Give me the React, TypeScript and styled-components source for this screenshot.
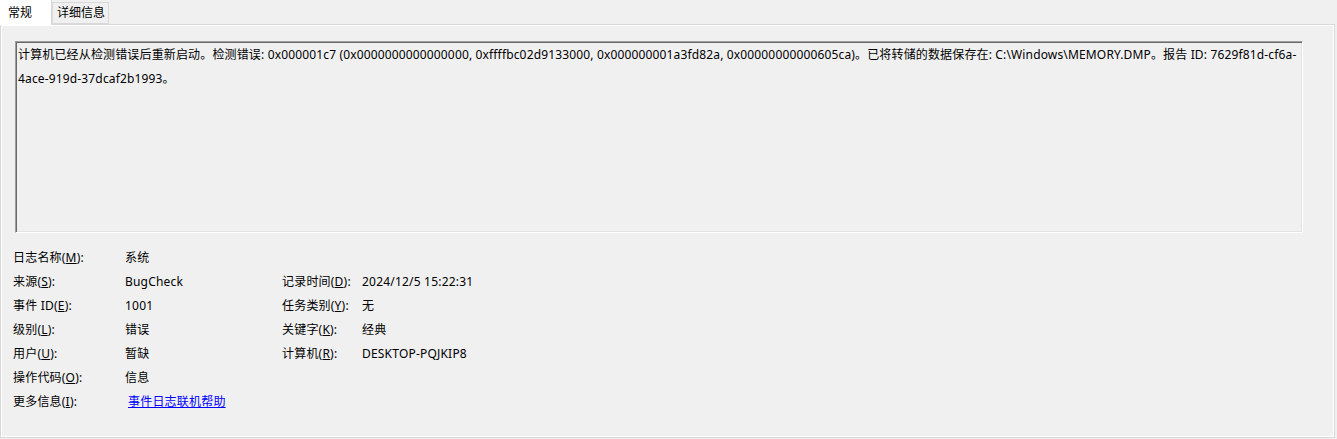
import React from "react";
import styled, { createGlobalStyle } from "styled-components";

const GlobalStyle = createGlobalStyle`
  html, body {
    margin: 0;
    padding: 0;
    background: #f0f0f0;
  }
  body {
    font-family: "Noto Sans", "Noto Sans CJK SC", sans-serif;
    font-size: 12px;
    letter-spacing: 0.2px;
    color: #000;
  }
`;

const Window = styled.div`
  width: 1337px;
  height: 439px;
  display: flex;
  flex-direction: column;
  background: #f0f0f0;
`;

const TabStrip = styled.div`
  display: flex;
  align-items: flex-end;
  height: 24px;
  position: relative;
  z-index: 1;
`;

const Tab = styled.div<{ $active?: boolean }>`
  box-sizing: border-box;
  display: flex;
  align-items: center;
  height: ${(p) => (p.$active ? "25px" : "22px")};
  margin-bottom: ${(p) => (p.$active ? "-1px" : "0")};
  padding-left: ${(p) => (p.$active ? "8px" : "4px")};
  padding-right: ${(p) => (p.$active ? "19px" : "3px")};
  background: ${(p) => (p.$active ? "#fff" : "#f0f0f0")};
  border: 1px solid #d9d9d9;
  border-bottom: ${(p) => (p.$active ? "none" : "1px solid #d9d9d9")};
  border-left: ${(p) => (p.$active ? "none" : "1px solid #d9d9d9")};
  border-top: ${(p) => (p.$active ? "none" : "1px solid #d9d9d9")};
  line-height: 1;
  letter-spacing: 0;
  white-space: nowrap;
`;

const Page = styled.div`
  box-sizing: border-box;
  width: 1335px;
  height: 414px;
  border: 1px solid #d9d9d9;
  box-shadow: inset 0 0 0 1px #fff;
  padding: 16px 0 0 12px;
  display: flex;
  flex-direction: column;
`;

const Description = styled.div`
  box-sizing: border-box;
  width: 1288px;
  height: 192px;
  margin-left: 2px;
  padding: 1px 0 0 2px;
  border-style: solid;
  border-width: 1px;
  border-color: #a0a0a0 #fff #fff #a0a0a0;
  box-shadow: inset 1px 1px 0 #696969, inset -1px -1px 0 #e3e3e3;
  line-height: 24px;
  letter-spacing: 0.15px;
  overflow: hidden;
`;

const Fields = styled.div`
  display: grid;
  grid-template-columns: 112px 157px 80px auto;
  grid-auto-rows: 24px;
  align-items: center;
  margin-top: 12px;
`;

const Label = styled.span<{ $col?: number }>`
  grid-column: ${(p) => p.$col ?? 1};
  white-space: nowrap;
`;

const Value = styled.span<{ $col?: number }>`
  grid-column: ${(p) => p.$col ?? 2};
  white-space: nowrap;
`;

const Key = styled.span`
  text-decoration: underline;
`;

const HelpLink = styled.a`
  grid-column: 2 / span 2;
  margin-left: 3px;
  color: #0000ff;
  text-decoration: underline;
  white-space: nowrap;
`;

const text =
  "计算机已经从检测错误后重新启动。检测错误: 0x000001c7 (0x0000000000000000, 0xffffbc02d9133000, 0x000000001a3fd82a, 0x00000000000605ca)。已将转储的数据保存在: C:\\Windows\\MEMORY.DMP。报告 ID: 7629f81d-cf6a-4ace-919d-37dcaf2b1993。";

const App = () => {
  return (
    <Window>
      <GlobalStyle />
      <TabStrip>
        <Tab $active>常规</Tab>
        <Tab>详细信息</Tab>
      </TabStrip>
      <Page>
        <Description>{text}</Description>
        <Fields>
          <Label>
            日志名称(<Key>M</Key>):
          </Label>
          <Value>系统</Value>

          <Label>
            来源(<Key>S</Key>):
          </Label>
          <Value>BugCheck</Value>
          <Label $col={3}>
            记录时间(<Key>D</Key>):
          </Label>
          <Value $col={4}>2024/12/5 15:22:31</Value>

          <Label>
            事件 ID(<Key>E</Key>):
          </Label>
          <Value>1001</Value>
          <Label $col={3}>
            任务类别(<Key>Y</Key>):
          </Label>
          <Value $col={4}>无</Value>

          <Label>
            级别(<Key>L</Key>):
          </Label>
          <Value>错误</Value>
          <Label $col={3}>
            关键字(<Key>K</Key>):
          </Label>
          <Value $col={4}>经典</Value>

          <Label>
            用户(<Key>U</Key>):
          </Label>
          <Value>暂缺</Value>
          <Label $col={3}>
            计算机(<Key>R</Key>):
          </Label>
          <Value $col={4}>DESKTOP-PQJKIP8</Value>

          <Label>
            操作代码(<Key>O</Key>):
          </Label>
          <Value>信息</Value>

          <Label>
            更多信息(<Key>I</Key>):
          </Label>
          <HelpLink href="#">事件日志联机帮助</HelpLink>
        </Fields>
      </Page>
    </Window>
  );
};

export default App;
